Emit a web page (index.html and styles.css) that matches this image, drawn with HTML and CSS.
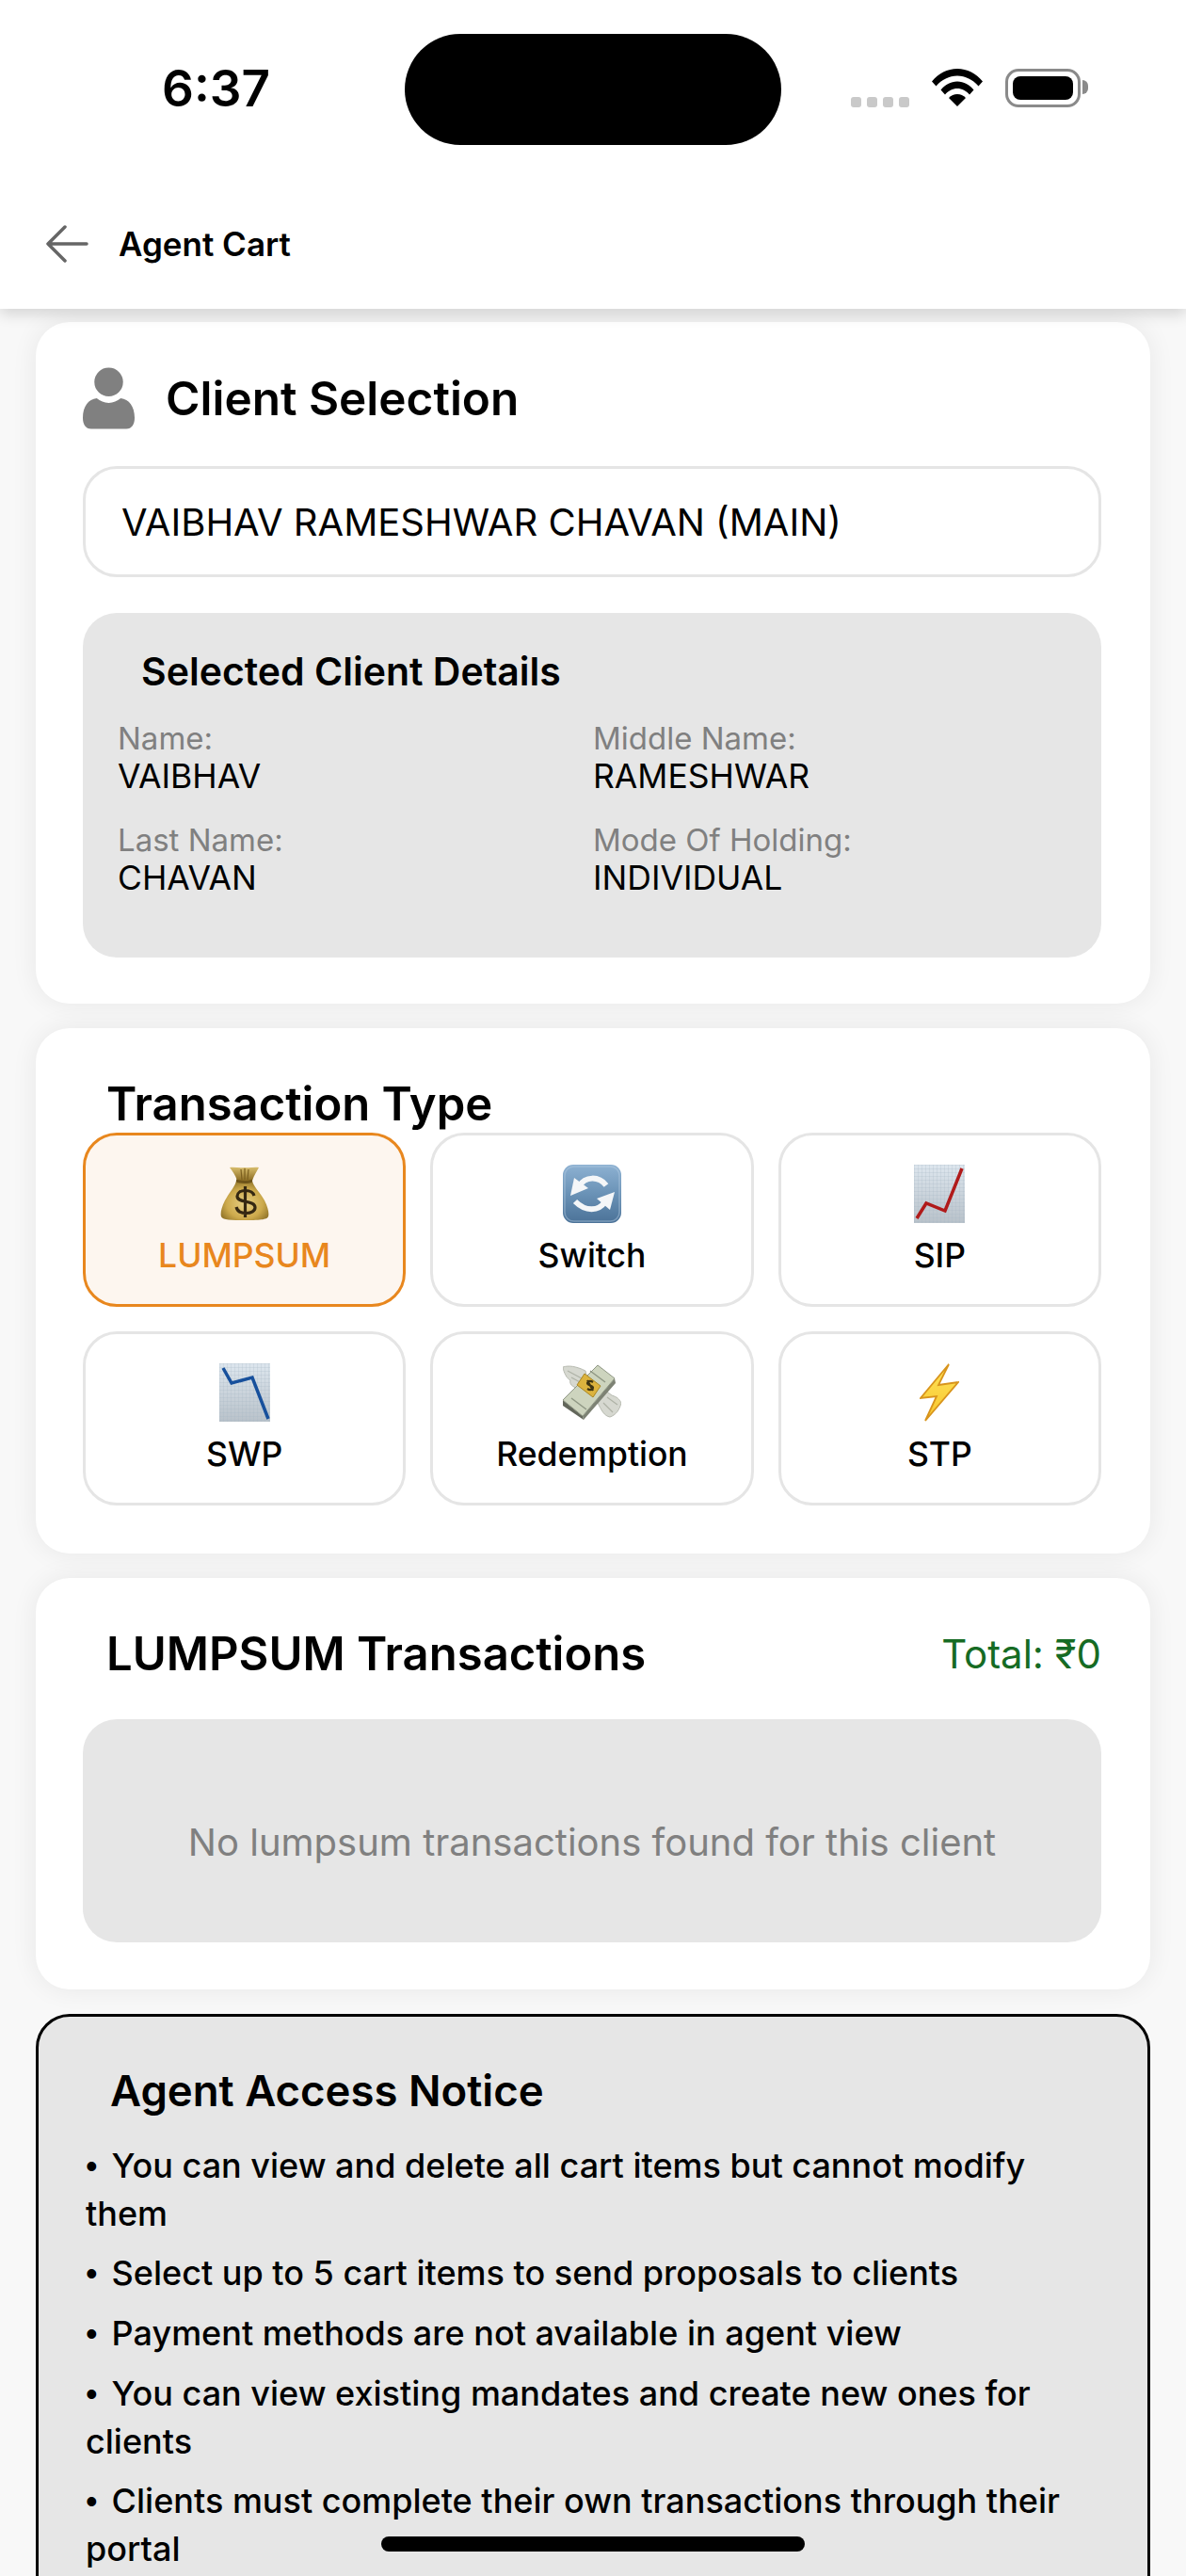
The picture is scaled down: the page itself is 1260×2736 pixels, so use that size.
FILE: index.html
```html
<!DOCTYPE html>
<html lang="en">
<head>
<meta charset="utf-8">
<title>Agent Cart</title>
<link rel="stylesheet" href="styles.css">
</head>
<body>
<div class="screen">
  <div class="status-bar">
    <span class="clock">6:37</span>
    <div class="island"></div>
    <div class="status-icons">
      <div class="signal"><i></i><i></i><i></i><i></i></div>
      <svg class="wifi" viewBox="0 0 54 40"><path d="M0 13.500C7 5 16.500 0 27 0s20 5 27 13.500l-4.500 5C43.500 11.500 35.500 7.500 27 7.500S10.500 11.500 4.500 18.500z"/><path d="M9.500 22.500C14 17 20 13.500 27 13.500S40 17 44.500 22.500L40 27.500C36.500 23.500 32 21 27 21s-9.500 2.500-13 6.500z"/><path d="M18 31c2.500-2.500 5.500-4 9-4s6.500 1.500 9 4L27 40z"/></svg>
      <div class="battery"><div class="battery-fill"></div></div>
    </div>
  </div>
  <header class="app-header">
    <svg class="back" viewBox="0 0 46 40"><path d="M44 20H3M21 2 3 20l18 18"/></svg>
    <h1 class="app-title">Agent Cart</h1>
  </header>
  <main class="content">
    <section class="card card-client">
      <div class="card-heading">
        <svg class="person" viewBox="0 0 56 66"><circle cx="28" cy="15.500" r="15.500"/><path d="M15 33c4 3 8 5 13 5s9-2 13-5c9 1 15 9 15 21 0 7-3 12-9 12H9c-6 0-9-5-9-12 0-12 6-20 15-21z"/></svg>
        <h2 class="card-title">Client Selection</h2>
      </div>
      <div class="client-input">VAIBHAV RAMESHWAR CHAVAN (MAIN)</div>
      <div class="details">
        <h3 class="details-title">Selected Client Details</h3>
        <dl class="details-grid">
          <div><dt>Name:</dt><dd>VAIBHAV</dd></div>
          <div><dt>Middle Name:</dt><dd>RAMESHWAR</dd></div>
          <div><dt>Last Name:</dt><dd>CHAVAN</dd></div>
          <div><dt>Mode Of Holding:</dt><dd>INDIVIDUAL</dd></div>
        </dl>
      </div>
    </section>

    <section class="card card-types">
      <h2 class="section-title">Transaction Type</h2>
      <div class="type-grid">
        <div class="type-btn type-btn-active">
          <svg class="emoji" viewBox="0 0 62 62">
            <defs>
              <radialGradient id="bag" cx="50%" cy="58%" r="58%"><stop offset="0" stop-color="#e6cf84"/><stop offset=".65" stop-color="#cdaa4c"/><stop offset="1" stop-color="#94772b"/></radialGradient>
              <linearGradient id="tuft" x1="0" y1="0" x2="0" y2="1"><stop offset="0" stop-color="#d8bd6c"/><stop offset="1" stop-color="#8c6d24"/></linearGradient>
            </defs>
            <path d="M15 3c5-1 11 1 16 0 5 1 10-1 15 0-2 4-5 8-7 14H23C21 11 18 7 15 3z" fill="url(#tuft)"/>
            <path d="M27 5l1 11M31 4v12M35 5l-1 11" stroke="#7b5f1f" stroke-width="1.200" fill="none"/>
            <path d="M22 17h17c1 6 8 12 13 21 4 8 5 14 4 17-1 3-6 4-25 4S7 58 6 55c-1-3 0-9 4-17 5-9 11-15 12-21z" fill="url(#bag)"/>
            <path d="M22 15.500c6 2 12 2 17 0v3c-5 2-11 2-17 0z" fill="#6e5419"/>
            <path d="M41 33c-1-4-5-5.500-9.500-5.500-5 0-8.500 2.500-8.500 6 0 8 19 3.500 19 12 0 3.500-4 6-9.500 6-5.500 0-9.500-2.500-10.500-6.500M31.500 23v33" stroke="#352812" stroke-width="3.200" fill="none"/>
          </svg>
          <span class="type-label">LUMPSUM</span>
        </div>
        <div class="type-btn">
          <svg class="emoji" viewBox="0 0 62 62">
            <defs>
              <linearGradient id="tile" x1="0" y1="0" x2="0" y2="1"><stop offset="0" stop-color="#8db1d2"/><stop offset=".5" stop-color="#6a92b6"/><stop offset="1" stop-color="#4b7298"/></linearGradient>
            </defs>
            <rect width="62" height="62" rx="11" fill="url(#tile)"/>
            <rect x="2" y="2" width="58" height="58" rx="9.500" fill="none" stroke="#b4cde2" stroke-opacity=".45" stroke-width="1.500"/>
            <path d="M17 23C24 12 38 12 46 22" fill="none" stroke="#f4f6f8" stroke-width="6"/>
            <path d="M8 33 12 14 27 25z" fill="#f4f6f8"/>
            <path d="M45 39C38 50 24 50 13 39" fill="none" stroke="#f4f6f8" stroke-width="6"/>
            <path d="M55 29 50 48 36 36z" fill="#f4f6f8"/>
          </svg>
          <span class="type-label">Switch</span>
        </div>
        <div class="type-btn">
          <svg class="emoji" viewBox="0 0 54 62">
            <defs>
              <linearGradient id="paper" x1="0" y1="0" x2="0" y2="1"><stop offset="0" stop-color="#dde6ee"/><stop offset="1" stop-color="#b9c2ca"/></linearGradient>
              <pattern id="cells" width="4" height="4" patternUnits="userSpaceOnUse"><path d="M4 0H0v4" fill="none" stroke="#a9b6c2" stroke-width=".5"/></pattern>
            </defs>
            <rect width="54" height="62" fill="url(#paper)"/>
            <rect width="54" height="62" fill="url(#cells)"/>
            <path d="M3 57 13 41l20 8L51 4" fill="none" stroke="#b01a1a" stroke-width="3.500" stroke-linejoin="miter"/>
          </svg>
          <span class="type-label">SIP</span>
        </div>
        <div class="type-btn">
          <svg class="emoji" viewBox="0 0 54 62">
            <rect width="54" height="62" fill="url(#paper)"/>
            <rect width="54" height="62" fill="url(#cells)"/>
            <path d="M4 5 13 21l22-6 17 44" fill="none" stroke="#17509c" stroke-width="3.500"/>
          </svg>
          <span class="type-label">SWP</span>
        </div>
        <div class="type-btn">
          <svg class="emoji" viewBox="0 0 62 62">
            <!-- wings behind the banknote bundle -->
            <path d="M0 4C6 2 14 3 24 8L27 24 14 26C8 24 7 20 8 18 4 16 1 10 0 4z" fill="#d6d8d0" stroke="#b7bab0" stroke-width="1"/>
            <path d="M5 8 20 16M9 15l11 6" stroke="#aeb2a6" stroke-width="1.200" fill="none"/>
            <path d="M62 42C60 50 56 55 50 57 44 56 41 50 37 42L44 28 52 34C58 36 60 38 62 42z" fill="#d6d8d0" stroke="#b7bab0" stroke-width="1"/>
            <path d="M47 36 58 44M43 42l10 10" stroke="#aeb2a6" stroke-width="1.200" fill="none"/>
            <!-- stack of notes -->
            <path d="M0 39 21 56 22 60 0 45z" fill="#62665a"/>
            <path d="M21 56 55 16 56 21 22 60z" fill="#7d8274"/>
            <path d="M0 39 37 2 55 16 21 56z" fill="#cdd4be" stroke="#8f9784" stroke-width="1"/>
            <path d="M29 8 45 20M9 37 25 49" stroke="#8f9784" stroke-width="1.500" fill="none"/>
            <path d="M23 11 40 24 32 36 15 23z" fill="#dcb33e" stroke="#a98520" stroke-width="1"/>
            <path d="M32 20c-3-2-6-1-6 1 0 3 6 2 6 5 0 2-3 3-6 1M26 18l6 11" fill="none" stroke="#3e3412" stroke-width="2.200"/>
          </svg>
          <span class="type-label">Redemption</span>
        </div>
        <div class="type-btn">
          <svg class="emoji" viewBox="0 0 42 62">
            <defs>
              <linearGradient id="bolt" x1="0" y1="0" x2="0" y2="1"><stop offset="0" stop-color="#ffe35a"/><stop offset="1" stop-color="#f7c62c"/></linearGradient>
            </defs>
            <path d="M31 1 1 37l17-2-12 26 35-41-21 3z" fill="url(#bolt)" stroke="#d8941c" stroke-width="1.800" stroke-linejoin="miter"/>
          </svg>
          <span class="type-label">STP</span>
        </div>
      </div>
    </section>

    <section class="card">
      <div class="cart-heading">
        <h2 class="section-title">LUMPSUM Transactions</h2>
        <span class="total">Total: ₹0</span>
      </div>
      <div class="empty-state">No lumpsum transactions found for this client</div>
    </section>

    <section class="notice">
      <h3 class="notice-title">Agent Access Notice</h3>
      <p>You can view and delete all cart items but cannot modify them</p>
      <p>Select up to 5 cart items to send proposals to clients</p>
      <p>Payment methods are not available in agent view</p>
      <p>You can view existing mandates and create new ones for clients</p>
      <p>Clients must complete their own transactions through their portal</p>
    </section>
  </main>
  <div class="home-indicator"></div>
</div>
</body>
</html>
```
FILE: styles.css
```css
* { box-sizing: border-box; }

html, body { margin: 0; padding: 0; }

body {
  background: #f8f8f8;
  color: #000;
  font-family: Inter, "Noto Sans", "Liberation Sans", sans-serif;
}

.screen {
  position: relative;
  width: 1260px;
  height: 2736px;
  overflow: hidden;
  background: #f8f8f8;
}

/* Status bar */
.status-bar {
  position: relative;
  z-index: 2;
  height: 190px;
  background: #fff;
  display: flex;
  justify-content: space-between;
  align-items: flex-start;
}

.clock {
  margin: 63px 0 0 172px;
  font-size: 53px;
  line-height: 62px;
  font-weight: 600;
}

.island {
  position: absolute;
  top: 36px;
  left: 430px;
  width: 400px;
  height: 118px;
  background: #000;
  border-radius: 59px;
}

.status-icons {
  margin: 73px 112px 0 0;
  display: flex;
  align-items: flex-start;
}

.signal {
  display: flex;
  gap: 6px;
  margin-top: 30px;
}

.signal i {
  width: 11px;
  height: 11px;
  border-radius: 3px;
  background: #c9c9c9;
}

.wifi {
  width: 54px;
  height: 40px;
  margin-left: 24px;
  fill: #000;
}

.battery {
  position: relative;
  width: 80px;
  height: 41px;
  margin-left: 24px;
  padding: 5px;
  border: 3px solid #8a8a8a;
  border-radius: 14px;
}

.battery::after {
  content: "";
  position: absolute;
  top: 9px;
  right: -11px;
  width: 6px;
  height: 15px;
  border-radius: 0 8px 8px 0;
  background: #8a8a8a;
}

.battery-fill {
  height: 100%;
  background: #000;
  border-radius: 8px;
}

/* App header */
.app-header {
  position: relative;
  z-index: 1;
  height: 138px;
  background: #fff;
  display: flex;
  align-items: center;
  padding-left: 48px;
  box-shadow: 0 6px 14px rgba(0, 0, 0, .14);
}

.back {
  width: 46px;
  height: 40px;
  fill: none;
  stroke: #666;
  stroke-width: 3.500;
  stroke-linecap: round;
  stroke-linejoin: round;
}

.app-title {
  margin: 0 0 0 32px;
  font-size: 35px;
  line-height: 50px;
  font-weight: 600;
}

/* Page content */
.content {
  padding: 14px 38px 0;
  display: flex;
  flex-direction: column;
  gap: 26px;
}

.card {
  background: #fff;
  border-radius: 36px;
  padding: 50px 52px 50px 50px;
  box-shadow: 0 0 28px rgba(0, 0, 0, .07);
}

.card-client {
  padding-bottom: 49px;
}

.card-heading {
  display: flex;
  align-items: center;
  height: 62px;
  margin-bottom: 41px;
}

.person {
  width: 55px;
  height: 66px;
  fill: #808080;
}

.card-title {
  margin: 0 0 0 33px;
  font-size: 49.500px;
  line-height: 62px;
  font-weight: 600;
}

.client-input {
  height: 118px;
  border: 3px solid #e5e5e5;
  border-radius: 36px;
  padding-left: 38px;
  display: flex;
  align-items: center;
  font-size: 40px;
  font-weight: 430;
  margin-bottom: 38px;
}

.details {
  height: 366px;
  background: #e6e6e6;
  border-radius: 36px;
  padding: 37px 37px 0;
}

.details-title {
  margin: 0 0 26px 25px;
  font-size: 41px;
  line-height: 50px;
  font-weight: 600;
}

.details-grid {
  margin: 0;
  display: grid;
  grid-template-columns: 505px 1fr;
  row-gap: 27px;
}

.details-grid dt {
  color: #808080;
  font-size: 33px;
  line-height: 41px;
}

.details-grid dd {
  margin: 0;
  font-size: 35.500px;
  line-height: 40px;
  font-weight: 400;
}

.section-title {
  margin: 1px 0 0 25px;
  font-size: 49px;
  line-height: 60px;
  font-weight: 600;
}

/* Transaction type buttons */
.card-types {
  padding-bottom: 51px;
}

.type-grid {
  display: grid;
  grid-template-columns: repeat(3, 1fr);
  gap: 26px;
}

.type-btn {
  height: 185px;
  border: 3px solid #e5e5e5;
  border-radius: 36px;
  background: #fff;
  display: flex;
  flex-direction: column;
  align-items: center;
  padding-top: 31px;
}

.type-btn-active {
  border-color: #e8871e;
  background: #fdf6ef;
}

.emoji {
  height: 62px;
  width: auto;
  flex: none;
}

.type-label {
  margin-top: 15px;
  font-size: 35.500px;
  line-height: 40px;
  font-weight: 450;
}

.type-btn-active .type-label {
  color: #e8871e;
}

/* Cart section */
.cart-heading {
  display: flex;
  justify-content: space-between;
  align-items: center;
  margin-bottom: 39px;
}

.total {
  color: #166b24;
  font-size: 42px;
  font-weight: 400;
}

.empty-state {
  height: 237px;
  padding-top: 24px;
  background: #e6e6e6;
  border-radius: 36px;
  display: flex;
  align-items: center;
  justify-content: center;
  color: #808080;
  font-size: 40px;
}

/* Access notice */
.notice {
  background: #e6e6e6;
  border: 3px solid #000;
  border-radius: 36px;
  padding: 50px;
}

.notice-title {
  margin: 1px 0 26px 26px;
  font-size: 45.500px;
  line-height: 56px;
  font-weight: 600;
}

.notice p {
  margin: 0 0 13px;
  font-size: 36px;
  line-height: 50px;
  font-weight: 450;
}

.notice p::before {
  content: "•";
  margin-right: 15px;
  font-family: "Liberation Sans", sans-serif;
}

.home-indicator {
  position: absolute;
  left: 405px;
  top: 2694px;
  width: 450px;
  height: 16px;
  border-radius: 8px;
  background: #000;
}
```
